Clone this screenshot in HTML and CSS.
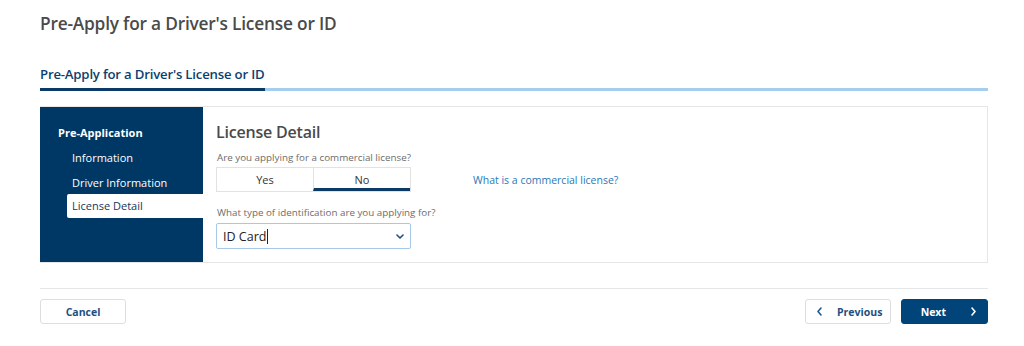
FILE: index.html
```html
<!DOCTYPE html>
<html>
<head>
<meta charset="utf-8">
<link rel="stylesheet" href="styles.css">
</head>
<body>
<div class="page">
  <h1 class="page-title">Pre-Apply for a Driver's License or ID</h1>
  <div class="tabbar">
    <div class="tab">Pre-Apply for a Driver's License or ID</div>
  </div>
  <div class="panel">
    <nav class="side">
      <div class="side-head">Pre-Application</div>
      <div class="side-item">Information</div>
      <div class="side-item">Driver Information</div>
      <div class="side-item active">License Detail</div>
    </nav>
    <div class="content">
      <h2 class="section-title">License Detail</h2>
      <div class="label">Are you applying for a commercial license?</div>
      <div class="row">
        <div class="toggle">
          <div class="opt">Yes</div>
          <div class="opt selected">No</div>
        </div>
        <a class="link">What is a commercial license?</a>
      </div>
      <div class="label second">What type of identification are you applying for?</div>
      <div class="select">
        <span class="value">ID Card<span class="caret"></span></span>
        <svg class="chev" width="8" height="5" viewBox="0 0 8 5"><path d="M1 1l3 3 3-3" fill="none" stroke="#1f4f82" stroke-width="1.6" stroke-linecap="round" stroke-linejoin="round"/></svg>
      </div>
    </div>
  </div>
  <div class="footer">
    <button class="btn">Cancel</button>
    <div class="right">
      <button class="btn prev"><svg width="5" height="9" viewBox="0 0 5 9"><path d="M4 1L1 4.5 4 8" fill="none" stroke="#1f5a8f" stroke-width="1.6" stroke-linecap="round" stroke-linejoin="round"/></svg><span>Previous</span></button>
      <button class="btn next"><span>Next</span><svg width="5" height="9" viewBox="0 0 5 9"><path d="M1 1l3 3.5L1 8" fill="none" stroke="#fff" stroke-width="1.6" stroke-linecap="round" stroke-linejoin="round"/></svg></button>
    </div>
  </div>
</div>
</body>
</html>
```
FILE: styles.css
```css
* { box-sizing: border-box; }
html, body { margin: 0; padding: 0; background: #fff; }
body { font-family: "Open Sans", "Noto Sans", sans-serif; color: #444; }
.page { padding: 0 36px 0 40px; }
.page-title { margin: 0; padding-top: 12px; height: 65px; font-size: 17.3px; font-weight: 600; color: #4a4a4a; letter-spacing: -0.2px; }
.tabbar { border-bottom: 3px solid #a4cdee; display: flex; }
.tab { font-size: 13.2px; font-weight: 600; color: #0d3f6e; padding-bottom: 5px; border-bottom: 3px solid #0b3a66; margin-bottom: -3px; width: 225px; white-space: nowrap; letter-spacing: -0.2px; }
.panel { margin-top: 15px; display: flex; border: 1px solid #e6e6e6; border-left: none; height: 157px; }
.side { width: 163px; background: #003865; padding-top: 18px; display: flex; flex-direction: column; }
.side-head { color: #fff; font-weight: 700; font-size: 11px; padding-left: 18px; height: 25px; line-height: 16px; }
.side-item { color: #fff; font-size: 11px; margin-left: 27px; padding-left: 5px; height: 25px; line-height: 16px; }
.side-item.active { background: #fff; color: #16365a; height: 24px; line-height: 24px; border-radius: 2px 0 0 2px; margin-top: -6px; }
.content { padding: 14px 0 0 13px; flex: 1; }
.section-title { margin: 0; font-size: 16px; font-weight: 600; color: #4a4a4a; height: 30px; letter-spacing: -0.2px; }
.label { font-size: 9.8px; color: #6c6c6c; height: 16px; line-height: 13px; padding-left: 1px; }
.label.second { margin-top: 14px; height: 17px; }
.row { display: flex; align-items: center; }
.toggle { display: flex; width: 195px; height: 25px; border: 1px solid #e2e2e2; }
.opt { flex: 1; text-align: center; font-size: 11px; line-height: 23px; color: #333; }
.opt.selected { border-left: 1px solid #e2e2e2; border-bottom: 3px solid #0b3a66; line-height: 23px; }
.link { margin-left: 62px; margin-top: 0; font-size: 10.5px; color: #2b78b8; text-decoration: none; }
.select { margin-top: 0; width: 195px; height: 26px; border: 1.5px solid #a6c9ea; border-radius: 2px; display: flex; align-items: center; justify-content: space-between; padding: 0 6px 0 6px; }
.value { font-size: 12.5px; color: #222; display: flex; align-items: center; }
.caret { display: inline-block; width: 1px; height: 15px; background: #222; margin-left: 1px; }
.footer { margin-top: 25px; border-top: 1px solid #e6e6e6; padding-top: 10px; display: flex; justify-content: space-between; }
.right { display: flex; gap: 10px; }
.btn { font-family: inherit; width: 86px; height: 25px; border: 1px solid #dedede; border-radius: 3px; background: #fff; color: #1f4f82; font-size: 10.5px; font-weight: 700; display: flex; align-items: center; justify-content: center; padding: 0; }
.btn.prev { justify-content: flex-start; padding-left: 11px; }
.btn.prev span { margin-left: 15px; }
.btn.next { width: 87px; background: #00447a; border-color: #00447a; color: #fff; justify-content: flex-end; padding-right: 11px; }
.btn.next span { margin-right: 25px; }
```
